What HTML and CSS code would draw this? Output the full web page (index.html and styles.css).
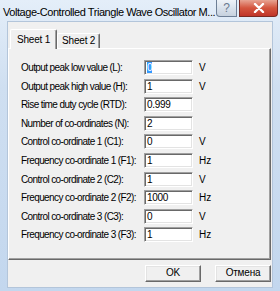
FILE: index.html
```html
<!DOCTYPE html>
<html>
  <head>
    <meta charset="UTF-8" />
    <link rel="stylesheet" href="styles.css">
  </head>
  <body>
    <div class="window">
      <div class="titlebar">
        <div class="title">Voltage-Controlled Triangle Wave Oscillator M...</div>
        <div class="caption-btns">
          <div class="cap-btn help">?</div>
          <div class="cap-btn close">
            <svg width="12" height="10" viewBox="0 0 12 10">
              <path d="M2 1 L10 9 M10 1 L2 9" stroke="#fff" stroke-width="2.4" stroke-linecap="round" />
            </svg>
          </div>
        </div>
      </div>
      <div class="client">
        <div class="tabs">
          <div class="tab active">Sheet 1</div>
          <div class="tab">Sheet 2</div>
        </div>
        <div class="panel">
          <div class="form">
            <div class="label">Output peak low value (L):</div>
            <div class="field"><span class="sel">0</span></div>
            <div class="unit">V</div>

            <div class="label">Output peak high value (H):</div>
            <div class="field">1</div>
            <div class="unit">V</div>

            <div class="label">Rise time duty cycle (RTD):</div>
            <div class="field">0.999</div>
            <div class="unit"></div>

            <div class="label">Number of co-ordinates (N):</div>
            <div class="field">2</div>
            <div class="unit"></div>

            <div class="label">Control co-ordinate 1 (C1):</div>
            <div class="field">0</div>
            <div class="unit">V</div>

            <div class="label">Frequency co-ordinate 1 (F1):</div>
            <div class="field">1</div>
            <div class="unit">Hz</div>

            <div class="label">Control co-ordinate 2 (C2):</div>
            <div class="field">1</div>
            <div class="unit">V</div>

            <div class="label">Frequency co-ordinate 2 (F2):</div>
            <div class="field">1000</div>
            <div class="unit">Hz</div>

            <div class="label">Control co-ordinate 3 (C3):</div>
            <div class="field">0</div>
            <div class="unit">V</div>

            <div class="label">Frequency co-ordinate 3 (F3):</div>
            <div class="field">1</div>
            <div class="unit">Hz</div>
          </div>
        </div>
        <div class="actions">
          <div class="btn">OK</div>
          <div class="btn">Отмена</div>
        </div>
      </div>
    </div>
  </body>
</html>
```

FILE: styles.css
```css
* {
  margin: 0;
  padding: 0;
  box-sizing: border-box;
}
body {
  width: 280px;
  height: 291px;
  overflow: hidden;
  font-family: "Liberation Sans", Arial, sans-serif;
}
.window {
  width: 280px;
  height: 291px;
  display: flex;
  flex-direction: column;
  background: linear-gradient(#e4eef9, #cfdff1 30%, #c3d7ee);
}
/* title bar */
.titlebar {
  height: 21px;
  display: flex;
  align-items: flex-start;
  justify-content: space-between;
}
.title {
  padding: 6px 0 0 3px;
  font-size: 11px;
  letter-spacing: -0.45px;
  color: #000;
  white-space: nowrap;
}
.caption-btns {
  display: flex;
  gap: 2px;
  margin-right: 2px;
}
.cap-btn {
  height: 17px;
  border: 1px solid #6d7f96;
  border-top: none;
  display: flex;
  align-items: center;
  justify-content: center;
}
.help {
  width: 21px;
  border-radius: 0 0 0 4px;
  background: linear-gradient(#eef3f8, #d9e2ec 50%, #c6d1de);
  color: #6a7a90;
  font-size: 12px;
}
.close {
  width: 39px;
  border-color: #7a2a22;
  border-radius: 0 0 4px 0;
  background: linear-gradient(#e8a493, #d4553e 50%, #c0352a);
}
/* client area */
.client {
  flex: 1;
  margin: 0 7px 3px 7px;
  background: #f0f0f0;
  border: 1px solid #b3c5da;
  display: flex;
  flex-direction: column;
}
.tabs {
  display: flex;
  align-items: flex-end;
  padding: 6px 0 0 2px;
  height: 26px;
}
.tab {
  font-size: 10px;
  letter-spacing: -0.2px;
  color: #000;
  background: #f0f0f0;
  border-left: 1px solid #fff;
  border-top: 1px solid #fff;
  border-right: 1px solid #696969;
  border-radius: 2px 2px 0 0;
  box-shadow: inset -1px 0 #a0a0a0;
  height: 15px;
  padding: 1px 4px 0 4px;
}
.tab.active {
  height: 20px;
  padding: 4px 6px 0 6px;
  margin-bottom: -1px;
  position: relative;
  z-index: 1;
}
.panel {
  height: 212px;
  margin-right: 1px;
  background: #f0f0f0;
  border: 1px solid;
  border-color: #fff #696969 #696969 #fff;
  box-shadow: inset -1px -1px #a0a0a0;
  padding: 11px 0 0 12px;
}
.form {
  display: grid;
  grid-template-columns: 123px 49px auto;
  grid-auto-rows: 15px;
  row-gap: 3.6px;
  align-items: center;
}
.label {
  font-size: 10px;
  letter-spacing: -0.6px;
  color: #000;
  white-space: nowrap;
}
.field {
  height: 15px;
  background: #fff;
  border: 1px solid;
  border-color: #a0a0a0 #fff #fff #a0a0a0;
  box-shadow: inset 1px 1px #696969, inset -1px -1px #e3e3e3;
  font-size: 10px;
  letter-spacing: -0.3px;
  line-height: 13px;
  padding-left: 2px;
  color: #000;
}
.sel {
  background: #3399ff;
  color: #fff;
}
.unit {
  padding-left: 6px;
  font-size: 10px;
  color: #000;
}
/* buttons */
.actions {
  display: flex;
  justify-content: flex-end;
  gap: 14px;
  padding: 5px 1px 0 0;
}
.btn {
  width: 56px;
  height: 17px;
  font-size: 10px;
  letter-spacing: -0.2px;
  text-align: center;
  line-height: 14px;
  color: #000;
  background: #f0f0f0;
  border: 1px solid;
  border-color: #fff #696969 #696969 #fff;
  box-shadow: inset -1px -1px #a0a0a0, inset 1px 1px #e3e3e3;
}
```
